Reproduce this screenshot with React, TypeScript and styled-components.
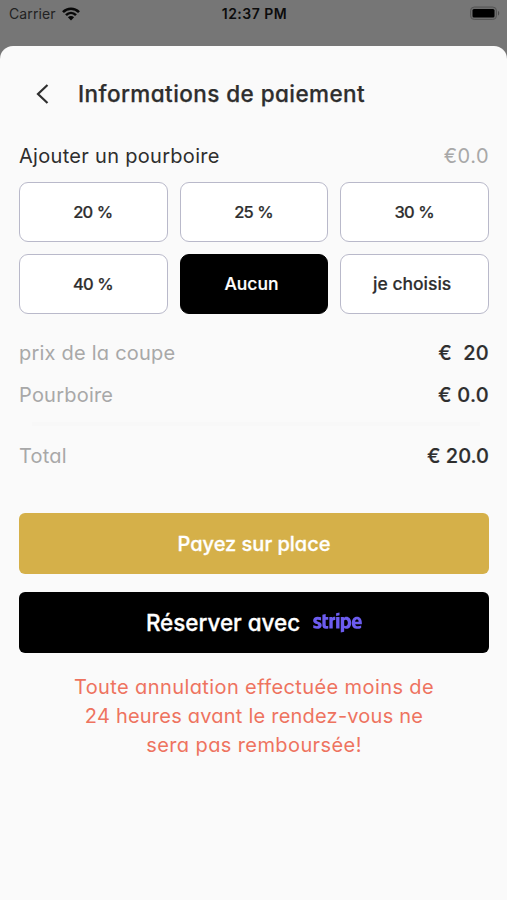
import React, { useState } from "react";
import styled, { createGlobalStyle } from "styled-components";
import { FaStripe } from "react-icons/fa";

const GlobalStyle = createGlobalStyle`
  *, *::before, *::after { box-sizing: border-box; }
  body {
    margin: 0;
    background: #767676;
    font-family: Inter, "Open Sans", sans-serif;
    font-feature-settings: "cv11" 1;
    color: #2e2e2e;
  }
  button { font: inherit; font-feature-settings: "cv11" 1; color: inherit; padding: 0; cursor: pointer; }
`;

const Screen = styled.div`
  width: 507px;
  height: 900px;
  margin: 0 auto;
  display: flex;
  flex-direction: column;
  overflow: hidden;
  background: #767676;
`;

const StatusBar = styled.header`
  height: 45.5px;
  flex: none;
  display: grid;
  grid-template-columns: 1fr auto 1fr;
  align-items: start;
  padding: 5px 7px 0 9px;
  line-height: 18px;
  font-feature-settings: normal;
`;

const Carrier = styled.div`
  display: flex;
  align-items: center;
  gap: 6px;
  font-size: 14px;
  letter-spacing: 0.1px;
  color: #222;
`;

const Clock = styled.div`
  font-size: 14px;
  font-weight: 600;
  color: #0c0c0c;
  letter-spacing: 0.5px;
`;

const BatterySlot = styled.div`
  display: flex;
  justify-content: flex-end;
  padding-top: 1px;
`;

const Sheet = styled.main`
  flex: 1;
  display: flex;
  flex-direction: column;
  padding: 25px 18px 0 19px;
  background: #fafafa;
  border-radius: 13px 13px 0 0;
`;

const TitleBar = styled.div`
  display: flex;
  align-items: center;
  height: 46px;
  padding-left: 16px;
`;

const BackButton = styled.button`
  display: flex;
  width: 16px;
  border: 0;
  background: none;
`;

const Title = styled.h1`
  margin: 0 0 0 27px;
  font-size: 22.5px;
  font-weight: 500;
  letter-spacing: 0.43px;
  white-space: nowrap;
  -webkit-text-stroke: 0.25px currentColor;
`;

const TipHeader = styled.div`
  display: flex;
  justify-content: space-between;
  align-items: center;
  height: 30px;
  margin-top: 24.5px;
  font-size: 20px;
`;

const TipLabel = styled.span`
  letter-spacing: 0.3px;
`;

const TipAmount = styled.span`
  color: #a8a8a8;
  letter-spacing: 0.5px;
`;

const TipGrid = styled.div`
  display: grid;
  grid-template-columns: repeat(3, 1fr);
  grid-auto-rows: 60px;
  gap: 12px;
  margin-top: 10.5px;
`;

const TipButton = styled.button<{ $selected: boolean; $percent: boolean }>`
  border: 1.5px solid ${(p) => (p.$selected ? "#000" : "#b9b9ca")};
  border-radius: 9px;
  background: ${(p) => (p.$selected ? "#000" : "#fff")};
  color: ${(p) => (p.$selected ? "#fff" : "#2e2e2e")};
  font-size: ${(p) => (p.$percent ? "16.5px" : "17.5px")};
  letter-spacing: ${(p) => (p.$percent ? "-0.9px" : "0")};
  word-spacing: ${(p) => (p.$percent ? "1px" : "0")};
  padding-right: ${(p) => (p.$percent ? "1px" : "5px")};
  font-weight: 500;
  -webkit-text-stroke: 0.2px currentColor;
`;

const Summary = styled.dl`
  margin: 19px 0 0;
`;

const SummaryRow = styled.div<{ $total?: boolean }>`
  display: flex;
  justify-content: space-between;
  align-items: center;
  height: 41.5px;
  font-size: 20px;
  margin-top: ${(p) => (p.$total ? "10px" : "0")};
`;

const RowLabel = styled.dt`
  color: #a8a8a8;
  letter-spacing: 0.22px;
`;

const RowValue = styled.dd<{ $spacing: number }>`
  margin: 0;
  font-weight: 500;
  white-space: pre;
  letter-spacing: ${(p) => p.$spacing}px;
  -webkit-text-stroke: 0.2px currentColor;
`;

const Divider = styled.hr`
  height: 4px;
  margin: 6px 9px 0 13px;
  border: 0;
  background: #f8f8f8;
`;

const PayButton = styled.button<{ $dark?: boolean }>`
  display: flex;
  align-items: center;
  justify-content: center;
  flex: none;
  height: 61px;
  margin-top: ${(p) => (p.$dark ? "18px" : "36px")};
  border: 0;
  border-radius: 6px;
  background: ${(p) => (p.$dark ? "#000" : "#d5b049")};
  color: #fff;
  font-size: ${(p) => (p.$dark ? "22.4px" : "20px")};
  font-weight: 500;
  -webkit-text-stroke: 0.3px currentColor;
`;

const StripeMark = styled(FaStripe)`
  width: 49px;
  height: 39px;
  margin-left: 13px;
  color: #6c5cf0;
`;

const Notice = styled.p`
  margin: 19.5px auto 0;
  width: 380px;
  text-align: center;
  font-size: 20px;
  line-height: 29.3px;
  color: #ee735f;
`;

const NoticeLine = styled.span<{ $spacing: number }>`
  display: block;
  letter-spacing: ${(p) => p.$spacing}px;
`;

const WifiIcon = () => (
  <svg width="18" height="14" viewBox="0 0 18 14" fill="none" stroke="#080808" strokeWidth="2.6">
    <path d="M1 5.1C5.5.6 12.5.6 17 5.1" />
    <path d="M4 8.2C6.9 5.3 11.1 5.3 14 8.2" />
    <path d="M9 13.4L5.9 10.3C7.7 8.7 10.3 8.7 12.1 10.3Z" fill="#080808" stroke="none" />
  </svg>
);

const BatteryIcon = () => (
  <svg width="31" height="15" viewBox="0 0 31 15">
    <rect x="1.5" y="1" width="26" height="12.5" rx="3.8" fill="#6d6d6d" stroke="#555" />
    <rect x="3.5" y="3" width="22" height="8.5" rx="1.5" fill="#000" />
    <path d="M29 5v4.5c1.6-.5 1.6-4 0-4.5Z" fill="#4b4b4b" />
  </svg>
);

const BackIcon = () => (
  <svg width="16" height="22" viewBox="0 0 16 22" fill="none" stroke="#2e2e2e" strokeWidth="2.2">
    <path d="M12.5 2L3 11l9.5 9" />
  </svg>
);

const tips = ["20 %", "25 %", "30 %", "40 %", "Aucun", "je choisis"];

export default function App() {
  const [selected, setSelected] = useState("Aucun");

  return (
    <>
      <GlobalStyle />
      <Screen>
        <StatusBar>
          <Carrier>
            Carrier
            <WifiIcon />
          </Carrier>
          <Clock>12:37 PM</Clock>
          <BatterySlot>
            <BatteryIcon />
          </BatterySlot>
        </StatusBar>
        <Sheet>
          <TitleBar>
            <BackButton aria-label="Retour">
              <BackIcon />
            </BackButton>
            <Title>Informations de paiement</Title>
          </TitleBar>
          <TipHeader>
            <TipLabel>Ajouter un pourboire</TipLabel>
            <TipAmount>€0.0</TipAmount>
          </TipHeader>
          <TipGrid>
            {tips.map((tip) => (
              <TipButton
                key={tip}
                $selected={tip === selected}
                $percent={tip.endsWith("%")}
                onClick={() => setSelected(tip)}
              >
                {tip}
              </TipButton>
            ))}
          </TipGrid>
          <Summary>
            <SummaryRow>
              <RowLabel>prix de la coupe</RowLabel>
              <RowValue $spacing={0.3}>{"€  20"}</RowValue>
            </SummaryRow>
            <SummaryRow>
              <RowLabel>Pourboire</RowLabel>
              <RowValue $spacing={0.3}>€ 0.0</RowValue>
            </SummaryRow>
            <Divider />
            <SummaryRow $total>
              <RowLabel>Total</RowLabel>
              <RowValue $spacing={0}>€ 20.0</RowValue>
            </SummaryRow>
          </Summary>
          <PayButton>Payez sur place</PayButton>
          <PayButton $dark>
            Réserver avec
            <StripeMark />
          </PayButton>
          <Notice>
            <NoticeLine $spacing={0.4}>Toute annulation effectuée moins de</NoticeLine>
            <NoticeLine $spacing={0.22}>24 heures avant le rendez-vous ne</NoticeLine>
            <NoticeLine $spacing={0.4}>sera pas remboursée!</NoticeLine>
          </Notice>
        </Sheet>
      </Screen>
    </>
  );
}
